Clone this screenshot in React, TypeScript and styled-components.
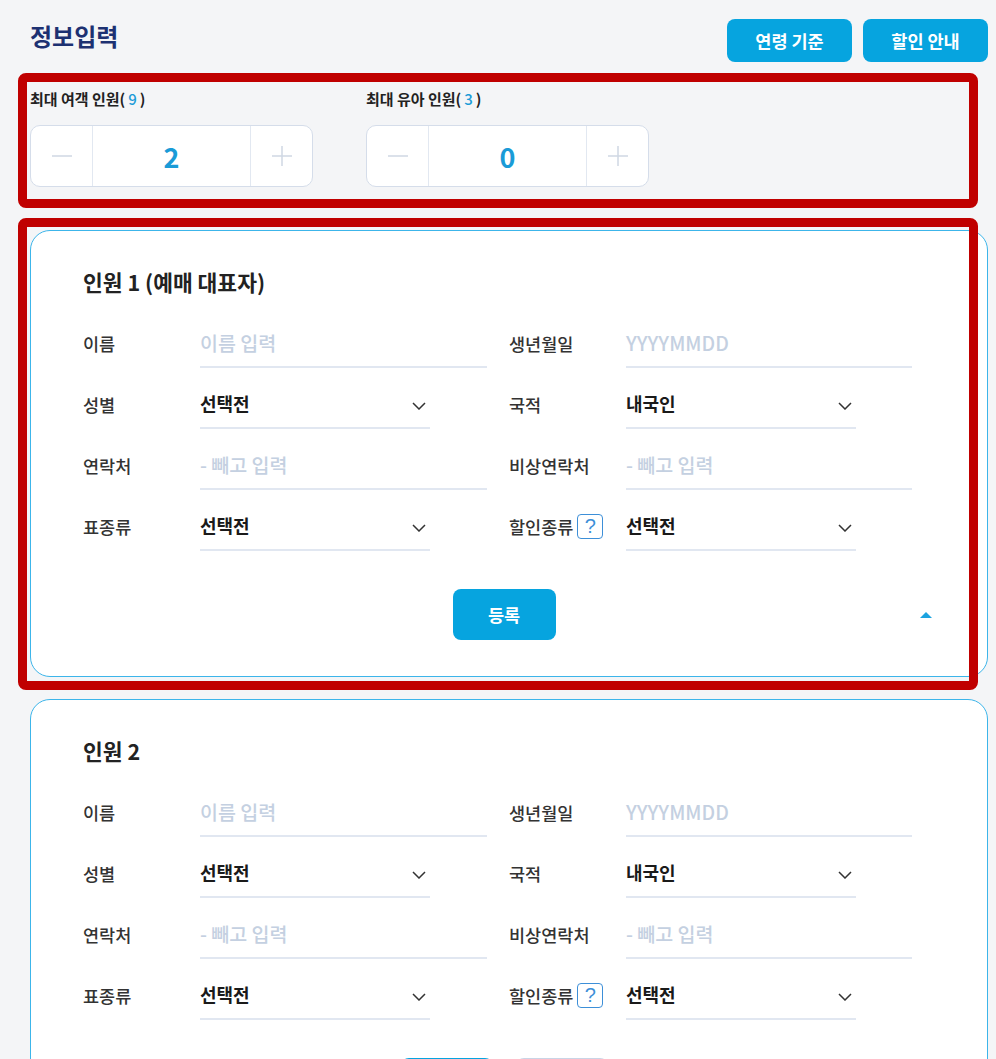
import styled, { createGlobalStyle } from "styled-components";

const GlobalStyle = createGlobalStyle`
  html { scrollbar-width: none; }
  html::-webkit-scrollbar { display: none; }
  * { box-sizing: border-box; }
  body {
    margin: 0;
    background: #f4f5f7;
    font-family: "Noto Sans CJK KR", "Noto Sans", sans-serif;
    color: #222;
  }
`;

const Page = styled.div`
  position: relative;
  padding: 19px 8px 40px 30px;
`;

const Header = styled.div`
  display: flex;
  align-items: flex-start;
  justify-content: space-between;
`;

const Title = styled.h2`
  margin: 0;
  font-size: 24px;
  line-height: 34px;
  font-weight: 700;
  color: #1d3172;
`;

const HeaderButtons = styled.div`
  display: flex;
  gap: 11px;
`;

const PillButton = styled.button`
  width: 125px;
  height: 43px;
  border: 0;
  border-radius: 8px;
  background: #06a4df;
  color: #fff;
  font-family: inherit;
  font-size: 17.5px;
  font-weight: 700;
`;

const CounterRow = styled.div`
  display: flex;
  gap: 53px;
  margin-top: 27px;
`;

const CounterLabel = styled.div`
  font-size: 15px;
  line-height: 20px;
  font-weight: 700;
  color: #222;
`;

const MaxCount = styled.span`
  color: #1a9bd7;
  font-weight: 500;
  padding: 0 3px;
`;

const CounterBox = styled.div`
  margin-top: 16px;
  width: 283px;
  height: 62px;
  display: grid;
  grid-template-columns: 61px 1fr 61px;
  border: 1px solid #d5ddea;
  border-radius: 10px;
  background: #fff;
  overflow: hidden;
`;

const StepButton = styled.button`
  border: 0;
  background: transparent;
  display: flex;
  align-items: center;
  justify-content: center;
  padding: 0;
`;

const CounterValue = styled.div`
  display: flex;
  align-items: center;
  justify-content: center;
  border-left: 1px solid #e2e8f1;
  border-right: 1px solid #e2e8f1;
  font-size: 27px;
  font-weight: 700;
  color: #1a9bd7;
`;

const CardList = styled.div`
  display: flex;
  flex-direction: column;
  gap: 22px;
  margin-top: 43px;
`;

const Card = styled.section`
  background: #fff;
  border: 1px solid #3cb5ea;
  border-radius: 20px;
  padding: 37px 75px 36px 52px;
`;

const CardTitle = styled.h3`
  margin: 0 0 22px;
  font-size: 21.5px;
  line-height: 28px;
  font-weight: 700;
  color: #222;
`;

const FieldGrid = styled.div`
  display: grid;
  grid-template-columns: 404px 403px;
  column-gap: 22px;
  row-gap: 11px;
`;

const Field = styled.div`
  display: flex;
  align-items: center;
  height: 50px;
`;

const FieldLabel = styled.div`
  width: 117px;
  flex: none;
  display: flex;
  align-items: center;
  gap: 4px;
  font-size: 17.5px;
  font-weight: 500;
  color: #333;
`;

const HelpBadge = styled.span`
  width: 26px;
  height: 25px;
  display: inline-flex;
  align-items: center;
  justify-content: center;
  border: 1.5px solid #3d8fd8;
  border-radius: 4px;
  color: #3d8fd8;
  font-family: "Liberation Sans", sans-serif;
  font-size: 20px;
  font-weight: 400;
`;

const Control = styled.div<{ $select?: boolean }>`
  width: ${(p) => (p.$select ? "230px" : "287px")};
  height: 50px;
  display: flex;
  align-items: center;
  justify-content: space-between;
  padding-right: ${(p) => (p.$select ? "4px" : "0")};
  border-bottom: 2px solid #e1e7f1;
`;

const Placeholder = styled.span`
  font-size: 19.5px;
  font-weight: 500;
  color: #c4d0e1;
`;

const SelectValue = styled.span`
  font-size: 18px;
  font-weight: 700;
  color: #1a1a1a;
`;

const Chevron = styled.svg`
  margin-top: 6px;
`;

const Footer = styled.div`
  display: grid;
  grid-template-columns: 1fr auto 1fr;
  align-items: center;
  margin: 38px -20px 0 -7px;
`;

const FooterActions = styled.div`
  grid-column: 2;
  display: flex;
  gap: 23px;
`;

const RegisterButton = styled.button<{ $outline?: "blue" | "gray" }>`
  width: ${(p) => (p.$outline ? "92px" : "103px")};
  height: 51px;
  border-radius: 8px;
  border: ${(p) =>
    p.$outline === "blue" ? "2px solid #06a4df" : p.$outline === "gray" ? "2px solid #c9d4e6" : "0"};
  background: ${(p) => (p.$outline ? "#fff" : "#06a4df")};
  color: ${(p) => (p.$outline === "blue" ? "#06a4df" : p.$outline === "gray" ? "#8a97ad" : "#fff")};
  font-family: inherit;
  font-size: 17.5px;
  font-weight: 700;
`;

const CollapseToggle = styled.span`
  grid-column: 3;
  justify-self: end;
  width: 0;
  height: 0;
  border-left: 6px solid transparent;
  border-right: 6px solid transparent;
  border-bottom: 6px solid #1ca3e0;
`;

// annotation frames drawn over the screenshot
const Highlight = styled.div<{ $top: number; $left: number; $w: number; $h: number }>`
  position: absolute;
  top: ${(p) => p.$top}px;
  left: ${(p) => p.$left}px;
  width: ${(p) => p.$w}px;
  height: ${(p) => p.$h}px;
  border: 9px solid #c00000;
  border-radius: 8px;
  pointer-events: none;
`;

const StepIcon = ({ plus }: { plus?: boolean }) => (
  <svg width="22" height="22" viewBox="0 0 22 22">
    <line x1="1" y1="11" x2="21" y2="11" stroke="#cfd7e3" strokeWidth="1.5" />
    {plus && <line x1="11" y1="1" x2="11" y2="21" stroke="#cfd7e3" strokeWidth="1.5" />}
  </svg>
);

type FieldDef = { label: string; help?: boolean; placeholder?: string; value?: string };

const fields: FieldDef[] = [
  { label: "이름", placeholder: "이름 입력" },
  { label: "생년월일", placeholder: "YYYYMMDD" },
  { label: "성별", value: "선택전" },
  { label: "국적", value: "내국인" },
  { label: "연락처", placeholder: "- 빼고 입력" },
  { label: "비상연락처", placeholder: "- 빼고 입력" },
  { label: "표종류", value: "선택전" },
  { label: "할인종류", help: true, value: "선택전" },
];

const counters = [
  { label: "최대 여객 인원(", max: 9, value: 2 },
  { label: "최대 유아 인원(", max: 3, value: 0 },
];

const PassengerCard = ({ title, first }: { title: string; first?: boolean }) => (
  <Card>
    <CardTitle>{title}</CardTitle>
    <FieldGrid>
      {fields.map((f) => (
        <Field key={f.label}>
          <FieldLabel>
            {f.label}
            {f.help && <HelpBadge>?</HelpBadge>}
          </FieldLabel>
          <Control $select={!!f.value}>
            {f.value ? <SelectValue>{f.value}</SelectValue> : <Placeholder>{f.placeholder}</Placeholder>}
            {f.value && (
              <Chevron width="14" height="8" viewBox="0 0 14 8">
                <polyline points="1,1 7,7 13,1" fill="none" stroke="#333" strokeWidth="1.5" />
              </Chevron>
            )}
          </Control>
        </Field>
      ))}
    </FieldGrid>
    <Footer>
      {first ? (
        <>
          <FooterActions>
            <RegisterButton>등록</RegisterButton>
          </FooterActions>
          <CollapseToggle />
        </>
      ) : (
        <FooterActions>
          <RegisterButton $outline="blue">수정</RegisterButton>
          <RegisterButton $outline="gray">삭제</RegisterButton>
        </FooterActions>
      )}
    </Footer>
  </Card>
);

export default function App() {
  return (
    <Page>
      <GlobalStyle />
      <Header>
        <Title>정보입력</Title>
        <HeaderButtons>
          <PillButton>연령 기준</PillButton>
          <PillButton>할인 안내</PillButton>
        </HeaderButtons>
      </Header>

      <CounterRow>
        {counters.map((c) => (
          <div key={c.label}>
            <CounterLabel>
              {c.label}
              <MaxCount>{c.max}</MaxCount>)
            </CounterLabel>
            <CounterBox>
              <StepButton>
                <StepIcon />
              </StepButton>
              <CounterValue>{c.value}</CounterValue>
              <StepButton>
                <StepIcon plus />
              </StepButton>
            </CounterBox>
          </div>
        ))}
      </CounterRow>

      <CardList>
        <PassengerCard title="인원 1 (예매 대표자)" first />
        <PassengerCard title="인원 2" />
      </CardList>

      <Highlight $top={73} $left={18} $w={960} $h={135} />
      <Highlight $top={218} $left={18} $w={960} $h={472} />
    </Page>
  );
}
